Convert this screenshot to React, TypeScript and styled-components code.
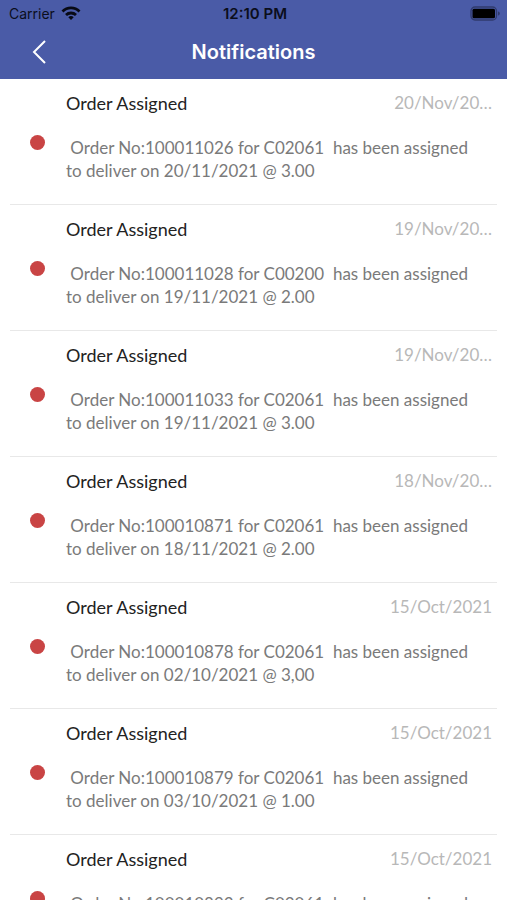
import React from "react";
import styled, { createGlobalStyle } from "styled-components";

const Global = createGlobalStyle`
  * { box-sizing: border-box; }
  html, body, #root { height: 100%; }
  body { margin: 0; background: #fff; overflow: hidden; }
`;

const Screen = styled.div`
  height: 100%;
  display: flex;
  flex-direction: column;
  font-family: Lato, sans-serif;
`;

const Header = styled.header`
  flex: none;
  background: #4a5ba7;
`;

const StatusBar = styled.div`
  display: grid;
  grid-template-columns: 1fr auto 1fr;
  align-items: center;
  height: 27px;
  padding: 0 6px 0 9px;
  color: #0b0e1c;
  font: 400 14px/27px Inter, sans-serif;
`;

const Carrier = styled.div`
  display: flex;
  align-items: center;
  gap: 6px;
`;

const Clock = styled.time`
  font-size: 15px;
  font-weight: 600;
`;

const Battery = styled.svg`
  justify-self: end;
`;

const NavBar = styled.div`
  display: grid;
  grid-template-columns: 60px 1fr 60px;
  align-items: center;
  height: 52px;
  padding-bottom: 2px;
`;

const BackButton = styled.button`
  display: flex;
  align-items: center;
  height: 44px;
  padding: 0 0 0 32px;
  border: 0;
  background: none;
  color: #fff;
`;

const Title = styled.h1`
  margin: 0;
  text-align: center;
  color: #fff;
  font: 600 20px/28px Inter, sans-serif;
`;

const List = styled.ul`
  flex: 1;
  min-height: 0;
  overflow: hidden;
  margin: 0;
  padding: 0 10px;
  list-style: none;
`;

const Item = styled.li`
  display: grid;
  grid-template-columns: 56px 1fr;
  height: 126px;
  border-bottom: 1px solid #e8e8e8;
`;

const Dot = styled.span`
  align-self: center;
  width: 15px;
  height: 15px;
  margin: 2px 0 0 20px;
  border-radius: 50%;
  background: #c94444;
`;

const Row = styled.div`
  display: flex;
  align-items: center;
  justify-content: space-between;
  height: 24px;
  margin: 12px 5px 0 0;
`;

const Name = styled.h2`
  margin: 0;
  color: #222;
  font-size: 18px;
  font-weight: 400;
  line-height: 24px;
`;

const DateText = styled.time`
  color: #b8b8b8;
  font-size: 17px;
  line-height: 26px;
`;

const Message = styled.p`
  margin: 21px 0 0;
  padding-right: 12px;
  color: #7a7a7a;
  font-size: 17px;
  line-height: 23px;
  white-space: pre-wrap;
`;

const notifications = [
  ["20/Nov/20…", "100011026", "C02061", "20/11/2021 @ 3.00"],
  ["19/Nov/20…", "100011028", "C00200", "19/11/2021 @ 2.00"],
  ["19/Nov/20…", "100011033", "C02061", "19/11/2021 @ 3.00"],
  ["18/Nov/20…", "100010871", "C02061", "18/11/2021 @ 2.00"],
  ["15/Oct/2021", "100010878", "C02061", "02/10/2021 @ 3,00"],
  ["15/Oct/2021", "100010879", "C02061", "03/10/2021 @ 1.00"],
  ["15/Oct/2021", "100010893", "C02061", "03/10/2021 @ 1.00"],
];

export default function App() {
  return (
    <Screen>
      <Global />
      <Header>
        <StatusBar>
          <Carrier>
            Carrier
            <svg width="20" height="15" viewBox="0 0 20 15" aria-label="Wi-Fi">
              <g fill="none" stroke="#080a15" strokeWidth="2.8">
                <path d="M1.5 5.4a12 12 0 0 1 17 0" />
                <path d="M5 9a7.2 7.2 0 0 1 10 0" />
              </g>
              <path d="M10 14l-2.7-2.8a3.9 3.9 0 0 1 5.400 0z" fill="#080a15" />
            </svg>
          </Carrier>
          <Clock>12:10 PM</Clock>
          <Battery width="31" height="15" viewBox="0 0 31 15" aria-label="Battery full">
            <rect x="1" y="1" width="25.5" height="13" rx="4" fill="none" stroke="#303b6d" strokeWidth="1.3" />
            <rect x="2.5" y="2.8" width="22.5" height="9.4" rx="1.5" fill="#000" />
            <path d="M28 5.5c2.5.8 2.5 3.2 0 4z" fill="#303b6d" />
          </Battery>
        </StatusBar>
        <NavBar>
          <BackButton aria-label="Back">
            <svg width="14" height="24" viewBox="0 0 14 24" fill="none" stroke="currentColor" strokeWidth="2">
              <path d="M13 1L2 12l11 11" />
            </svg>
          </BackButton>
          <Title>Notifications</Title>
        </NavBar>
      </Header>
      <List>
        {notifications.map(([date, order, customer, due]) => (
          <Item key={order}>
            <Dot />
            <div>
              <Row>
                <Name>Order Assigned</Name>
                <DateText>{date}</DateText>
              </Row>
              <Message>{` Order No:${order} for ${customer}  has been assigned to deliver on ${due}`}</Message>
            </div>
          </Item>
        ))}
      </List>
    </Screen>
  );
}
